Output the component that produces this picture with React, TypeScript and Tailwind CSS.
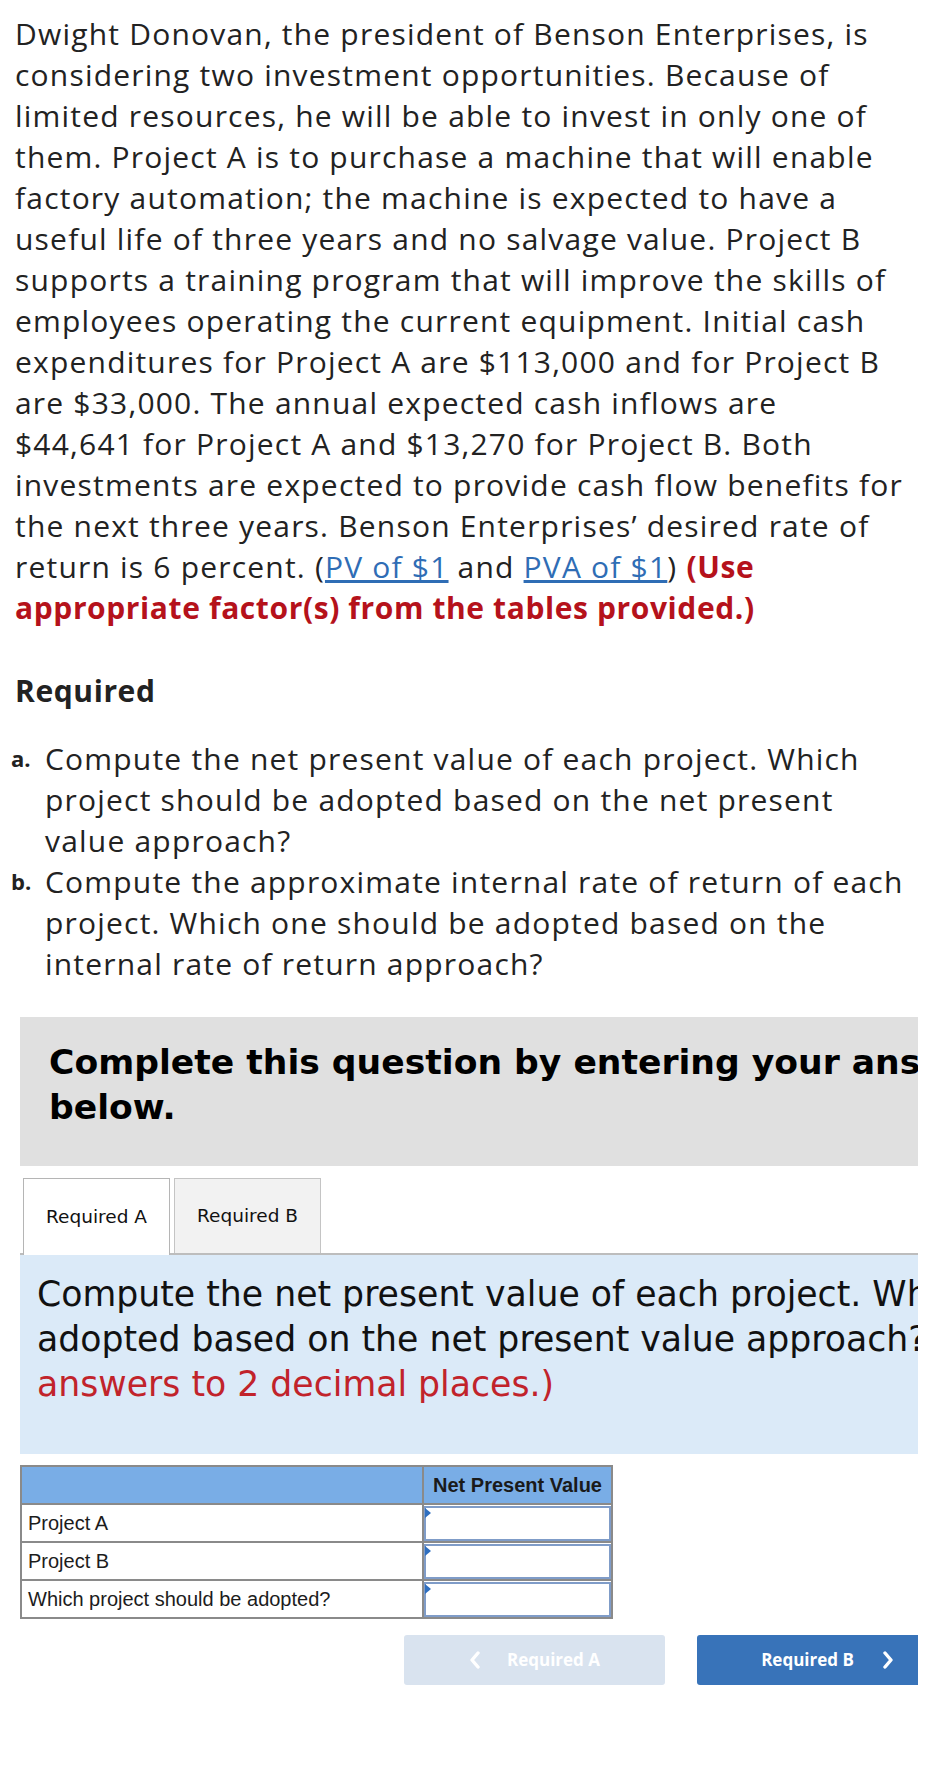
import React from 'react'

const introLines: React.ReactNode[] = [
  'Dwight Donovan, the president of Benson Enterprises, is',
  'considering two investment opportunities. Because of',
  'limited resources, he will be able to invest in only one of',
  'them. Project A is to purchase a machine that will enable',
  'factory automation; the machine is expected to have a',
  'useful life of three years and no salvage value. Project B',
  'supports a training program that will improve the skills of',
  'employees operating the current equipment. Initial cash',
  'expenditures for Project A are $113,000 and for Project B',
  'are $33,000. The annual expected cash inflows are',
  '$44,641 for Project A and $13,270 for Project B. Both',
  'investments are expected to provide cash flow benefits for',
  'the next three years. Benson Enterprises\u2019 desired rate of',
  <>
    return is 6 percent. (<a className="text-[#2f6db5] underline underline-offset-2">PV of $1</a> and{' '}
    <a className="text-[#2f6db5] underline underline-offset-2">PVA of $1</a>){' '}
    <span className="font-bold tracking-[0.6px] text-[#b5121b]">(Use</span>
  </>,
  <span className="font-bold tracking-[0.6px] text-[#b5121b]">appropriate factor(s) from the tables provided.)</span>,
]

const requirements = [
  {
    id: 'a',
    lines: [
      'Compute the net present value of each project. Which',
      'project should be adopted based on the net present',
      'value approach?',
    ],
  },
  {
    id: 'b',
    lines: [
      'Compute the approximate internal rate of return of each',
      'project. Which one should be adopted based on the',
      'internal rate of return approach?',
    ],
  },
]

const rows = ['Project A', 'Project B', 'Which project should be adopted?']

function InputCell() {
  return (
    <td className="relative border-2 border-[#8a8a8a] p-0">
      <div className="h-[35px] border-2 border-[#7f9cc8] bg-white" />
      <span className="absolute left-[1px] top-[3px] h-0 w-0 border-y-[5px] border-l-[6px] border-y-transparent border-l-[#2f6fc0]" />
    </td>
  )
}

export default function App() {
  return (
    <div className="min-h-[1768px] w-[941px] bg-white text-[#222]">
      {/* question text */}
      <div className="px-[15px] pt-[13px] font-['Open_Sans',sans-serif] text-[30px] leading-[41px] tracking-[1.2px]">
        {introLines.map((line, i) => (
          <div key={i} className="whitespace-nowrap">
            {line}
          </div>
        ))}
        <div className="mt-[42px] font-bold tracking-[0.6px]">Required</div>
      </div>

      <div className="mt-[27px] font-['Open_Sans',sans-serif] text-[30px] leading-[41px] tracking-[1.2px]">
        {requirements.map((req) => (
          <div key={req.id} className="flex pl-[11px]">
            <div className="w-[34px] shrink-0 text-[22px] font-bold tracking-normal">{req.id}.</div>
            <div>
              {req.lines.map((l) => (
                <div key={l} className="whitespace-nowrap">
                  {l}
                </div>
              ))}
            </div>
          </div>
        ))}
      </div>

      {/* answer widget */}
      <div className="ml-[20px] mt-[33px] w-[898px] overflow-hidden">
        <div className="w-[1100px]">
          <div className="bg-[#e0e0e0] pb-[36px] pl-[29px] pt-[23px] font-['DejaVu_Sans',sans-serif] text-[34.6px] font-bold leading-[45px] text-black">
            <div className="whitespace-nowrap">Complete this question by entering your answers in the tabs</div>
            <div>below.</div>
          </div>

          <div className="mt-[12px] flex gap-[4px] border-b-2 border-[#bdbdbd] pl-[3px] font-['DejaVu_Sans',sans-serif] text-[18.5px] text-[#111]">
            <div className="-mb-[2px] flex h-[77px] w-[147px] items-center justify-center border-x border-t border-[#b5b5b5] bg-white">
              Required A
            </div>
            <div className="flex h-[75px] w-[147px] items-center justify-center border-x border-t border-[#c4c4c4] bg-[#f2f2f2]">
              Required B
            </div>
          </div>

          <div className="h-[199px] bg-[#dbeaf8] pl-[17px] pt-[17px] font-['DejaVu_Sans',sans-serif] text-[34.7px] leading-[45px] text-[#111]">
            <div className="whitespace-nowrap">
              Compute the net present value of each project. Which project should be
            </div>
            <div className="whitespace-nowrap">
              adopted based on the net present value approach?{' '}
              <span className="text-[#c1232b]">(Round your final</span>
            </div>
            <div className="whitespace-nowrap text-[#c1232b]">answers to 2 decimal places.)</div>
          </div>

          <table className="mt-[11px] w-[593px] border-collapse font-['Liberation_Sans',Arial,sans-serif] text-[20px] text-[#1c1c1c]">
            <thead>
              <tr className="h-[38px] bg-[#79ade6]">
                <th className="w-[402px] border-2 border-[#8a8a8a]" />
                <th className="border-2 border-[#8a8a8a] text-center font-bold text-[#1a1a1a]">Net Present Value</th>
              </tr>
            </thead>
            <tbody>
              {rows.map((r) => (
                <tr key={r} className="h-[38px]">
                  <td className="border-2 border-[#8a8a8a] pl-[6px] text-left">{r}</td>
                  <InputCell />
                </tr>
              ))}
            </tbody>
          </table>

          <div className="mt-[16px] flex w-[938px] justify-end gap-[32px] font-['Open_Sans',sans-serif] text-[17px] font-bold text-white">
            <button className="flex h-[50px] w-[261px] items-center justify-center gap-[26px] rounded-[3px] bg-[#d9e3ef]">
              <svg width="12" height="18" viewBox="0 0 12 18" fill="none" stroke="white" strokeWidth="3.4" strokeLinecap="round" strokeLinejoin="round">
                <path d="M9 2 L3 9 L9 16" />
              </svg>
              <span>Required A</span>
            </button>
            <button className="flex h-[50px] w-[261px] items-center justify-center gap-[28px] rounded-[3px] bg-[#3873b9]">
              <span>Required B</span>
              <svg width="12" height="18" viewBox="0 0 12 18" fill="none" stroke="white" strokeWidth="3.4" strokeLinecap="round" strokeLinejoin="round">
                <path d="M3 2 L9 9 L3 16" />
              </svg>
            </button>
          </div>
        </div>
      </div>
    </div>
  )
}
